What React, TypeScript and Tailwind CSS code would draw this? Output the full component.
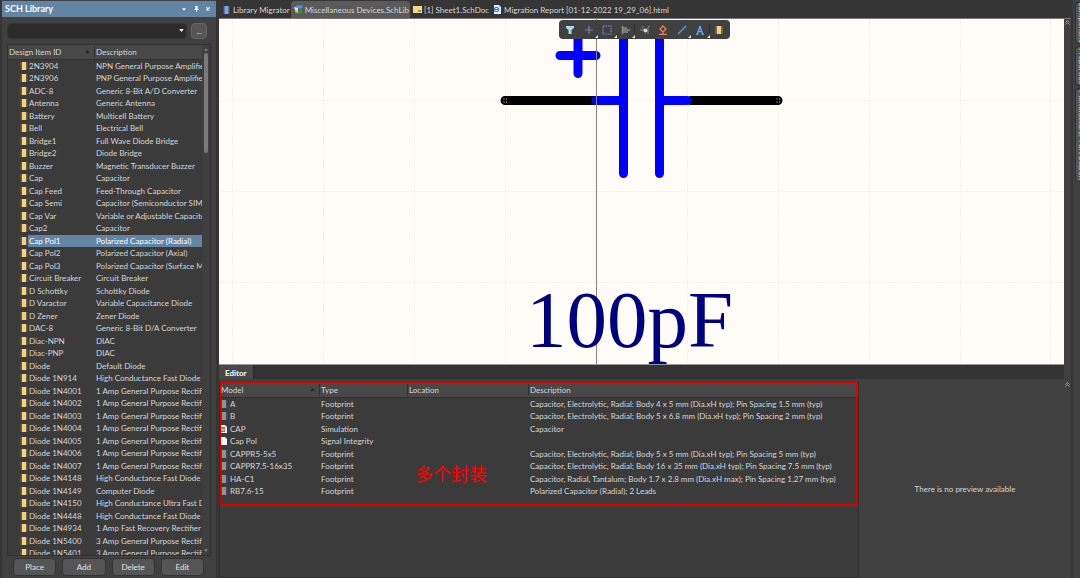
import React from 'react';

const libItems: [string, string][] = [
  ['2N3904', 'NPN General Purpose Amplifier'],
  ['2N3906', 'PNP General Purpose Amplifier'],
  ['ADC-8', 'Generic 8-Bit A/D Converter'],
  ['Antenna', 'Generic Antenna'],
  ['Battery', 'Multicell Battery'],
  ['Bell', 'Electrical Bell'],
  ['Bridge1', 'Full Wave Diode Bridge'],
  ['Bridge2', 'Diode Bridge'],
  ['Buzzer', 'Magnetic Transducer Buzzer'],
  ['Cap', 'Capacitor'],
  ['Cap Feed', 'Feed-Through Capacitor'],
  ['Cap Semi', 'Capacitor (Semiconductor SIM Model)'],
  ['Cap Var', 'Variable or Adjustable Capacitor'],
  ['Cap2', 'Capacitor'],
  ['Cap Pol1', 'Polarized Capacitor (Radial)'],
  ['Cap Pol2', 'Polarized Capacitor (Axial)'],
  ['Cap Pol3', 'Polarized Capacitor (Surface Mount)'],
  ['Circuit Breaker', 'Circuit Breaker'],
  ['D Schottky', 'Schottky Diode'],
  ['D Varactor', 'Variable Capacitance Diode'],
  ['D Zener', 'Zener Diode'],
  ['DAC-8', 'Generic 8-Bit D/A Converter'],
  ['Diac-NPN', 'DIAC'],
  ['Diac-PNP', 'DIAC'],
  ['Diode', 'Default Diode'],
  ['Diode 1N914', 'High Conductance Fast Diode'],
  ['Diode 1N4001', '1 Amp General Purpose Rectifier'],
  ['Diode 1N4002', '1 Amp General Purpose Rectifier'],
  ['Diode 1N4003', '1 Amp General Purpose Rectifier'],
  ['Diode 1N4004', '1 Amp General Purpose Rectifier'],
  ['Diode 1N4005', '1 Amp General Purpose Rectifier'],
  ['Diode 1N4006', '1 Amp General Purpose Rectifier'],
  ['Diode 1N4007', '1 Amp General Purpose Rectifier'],
  ['Diode 1N4148', 'High Conductance Fast Diode'],
  ['Diode 1N4149', 'Computer Diode'],
  ['Diode 1N4150', 'High Conductance Ultra Fast Diode'],
  ['Diode 1N4448', 'High Conductance Fast Diode'],
  ['Diode 1N4934', '1 Amp Fast Recovery Rectifier'],
  ['Diode 1N5400', '3 Amp General Purpose Rectifier'],
  ['Diode 1N5401', '3 Amp General Purpose Rectifier'],
];

type ModelIcon = 'footprint' | 'sim' | 'page';

const models: { icon: ModelIcon; name: string; type: string; desc: string }[] = [
  { icon: 'footprint', name: 'A', type: 'Footprint', desc: 'Capacitor, Electrolytic, Radial: Body 4 x 5 mm (Dia.xH typ); Pin Spacing 1.5 mm (typ)' },
  { icon: 'footprint', name: 'B', type: 'Footprint', desc: 'Capacitor, Electrolytic, Radial; Body 5 x 6.8 mm (Dia.xH typ); Pin Spacing 2 mm (typ)' },
  { icon: 'sim', name: 'CAP', type: 'Simulation', desc: 'Capacitor' },
  { icon: 'page', name: 'Cap Pol', type: 'Signal Integrity', desc: '' },
  { icon: 'footprint', name: 'CAPPR5-5x5', type: 'Footprint', desc: 'Capacitor, Electrolytic, Radial; Body 5 x 5 mm (Dia.xH typ); Pin Spacing 5 mm (typ)' },
  { icon: 'footprint', name: 'CAPPR7.5-16x35', type: 'Footprint', desc: 'Capacitor, Electrolytic, Radial; Body 16 x 35 mm (Dia.xH typ); Pin Spacing 7.5 mm (typ)' },
  { icon: 'footprint', name: 'HA-C1', type: 'Footprint', desc: 'Capacitor, Radial, Tantalum; Body 1.7 x 2.8 mm (Dia.xH max); Pin Spacing 1.27 mm (typ)' },
  { icon: 'footprint', name: 'RB7.6-15', type: 'Footprint', desc: 'Polarized Capacitor (Radial); 2 Leads' },
];

const ChipIcon = ({ body, pins, className }: { body: string; pins: string; className?: string }) => (
  <svg viewBox="0 0 8 8" className={className ?? 'w-2 h-2 shrink-0'}>
    <path d="M0.5 1h7M0.5 3h7M0.5 5h7M0.5 7h7" stroke={pins} strokeWidth="0.9" />
    <rect x="2" y="0" width="4" height="8" fill={body} />
  </svg>
);

const ModelGlyph = ({ icon }: { icon: ModelIcon }) => {
  if (icon === 'footprint') return <ChipIcon body="#8e929a" pins="#5c5f66" />;
  return (
    <svg viewBox="0 0 8 8" className="w-2 h-2 shrink-0">
      <path d="M1 0h4l2 2v6H1z" fill="#f4f6fa" />
      <path d="M5 0v2h2z" fill="#a9b6cc" />
      {icon === 'sim' && (
        <>
          <rect x="0" y="2" width="5" height="5" fill="#d9532c" />
          <path d="M1 5.5V4h1.5v1.500h1.500V3.500" stroke="#fff" strokeWidth="0.7" fill="none" />
        </>
      )}
    </svg>
  );
};

const SortArrow = () => (
  <svg viewBox="0 0 6 4" className="w-[5px] h-[3px]">
    <path d="M0 4L3 0l3 4z" fill="#232323" />
  </svg>
);

const CollapseIcon = () => (
  <svg viewBox="0 0 6 6" className="w-[5px] h-[5px]" fill="none" stroke="#b0b0b0" strokeWidth="1">
    <path d="M0.500 3L3 0.700 5.500 3M0.500 5.500L3 3.200l2.500 2.300" />
  </svg>
);

const LibraryPanel = () => (
  <aside className="flex w-[218px] shrink-0 flex-col border-x-2 border-[#353535] bg-[#404040]">
    <header className="flex h-4 mt-px shrink-0 items-center bg-[#6385a5] pl-[3px] pr-1">
      <h1 className="flex-1 text-[9px] font-bold text-white">SCH Library</h1>
      <div className="flex items-center gap-1">
        <button aria-label="Menu" className="flex w-2 justify-center">
          <svg viewBox="0 0 6 4" className="w-1 h-[3px]"><path d="M0 0h6L3 4z" fill="#fff" /></svg>
        </button>
        <button aria-label="Pin" className="flex w-2 justify-center">
          <svg viewBox="0 0 6 8" className="w-[5px] h-[6px]"><path d="M1.500 0h3v4H6v1H3.500v3h-1V5H0V4h1.500z" fill="#fff" /></svg>
        </button>
        <button aria-label="Close" className="flex w-2 justify-center">
          <svg viewBox="0 0 6 6" className="w-1 h-1"><path d="M0.500 0.500l5 5M5.500 0.500l-5 5" stroke="#fff" strokeWidth="1.700" /></svg>
        </button>
      </div>
    </header>

    <div className="mt-[6px] flex h-4 shrink-0 gap-1 pl-[5px] pr-[9px]">
      <div className="relative flex-1">
        <select aria-label="Filter" className="h-4 w-full appearance-none rounded-sm border border-[#353535] bg-[#2b2b2b] px-1 text-[#d0d0d0]">
          <option></option>
        </select>
        <svg viewBox="0 0 6 4" className="pointer-events-none absolute right-[3px] top-[6px] w-[5px] h-[3px]"><path d="M0 0h6L3 4z" fill="#fff" /></svg>
      </div>
      <button className="h-4 w-4 rounded-sm border border-[#666] bg-[#555] leading-none text-[#ddd]">...</button>
    </div>

    <div className="mx-[5px] mt-[5px] flex min-h-0 flex-1 border border-[#303030] bg-[#3b3b3b]">
      <div className="min-w-0 flex-1 overflow-hidden">
        <table className="w-full table-fixed border-collapse">
          <thead>
            <tr className="h-[14px] border-b border-[#303030] bg-[#484848] text-left">
              <th className="w-[87px] p-0 pl-px font-normal">
                <div className="flex items-center justify-between border-r border-[#303030] pr-1">Design Item ID <SortArrow /></div>
              </th>
              <th className="p-0 pl-px font-normal">Description</th>
            </tr>
          </thead>
          <tbody>
            {libItems.map(([id, desc]) => {
              const selected = id === 'Cap Pol1';
              return (
                <tr key={id} className="odd:h-[12px] even:h-[13px]">
                  <td className="p-0 pl-3">
                    <div className="flex items-center">
                      <ChipIcon body="#f3d382" pins="#a98a3e" />
                      <span className={`flex-1 whitespace-nowrap pl-px ${selected ? 'bg-[#6385a5] text-white' : ''}`}>{id}</span>
                    </div>
                  </td>
                  <td className={`overflow-hidden whitespace-nowrap p-0 pl-px ${selected ? 'bg-[#6385a5] text-white' : ''}`}>{desc}</td>
                </tr>
              );
            })}
          </tbody>
        </table>
      </div>
      <div className="flex w-2 shrink-0 flex-col items-center bg-[#3f3f3f] py-[3px]">
        <svg viewBox="0 0 6 4" className="w-1 h-[3px]"><path d="M0 4L3 0l3 4z" fill="#858585" /></svg>
        <div className="mt-[2px] h-[100px] w-1 rounded-full bg-[#7a7a7a]" />
        <svg viewBox="0 0 6 4" className="mt-auto w-1 h-[3px]"><path d="M0 0h6L3 4z" fill="#858585" /></svg>
      </div>
    </div>

    <div className="my-[2px] flex h-[18px] shrink-0 gap-[6px] pl-[11px] pr-3">
      {['Place', 'Add', 'Delete', 'Edit'].map((label) => (
        <button key={label} className="flex-1 rounded-sm border border-[#333] bg-[#555] text-[#e2e2e2]">{label}</button>
      ))}
    </div>
  </aside>
);

const docTabs = [
  { label: 'Library Migrator', kind: 'migrator' },
  { label: 'Miscellaneous Devices.SchLib', kind: 'lib' },
  { label: '[1] Sheet1.SchDoc', kind: 'sheet' },
  { label: 'Migration Report [01-12-2022 19_29_06].html', kind: 'html' },
];

const TabIcon = ({ kind }: { kind: string }) => {
  if (kind === 'migrator') return <ChipIcon body="#7da2ef" pins="#56688f" className="w-[9px] h-2 shrink-0" />;
  return (
    <svg viewBox="0 0 9 9" className="w-[9px] h-[9px] shrink-0">
      {kind === 'lib' && (
        <>
          <path d="M1 2l3-2 5 1-2 3z" fill="#4c97d8" />
          <path d="M0 2l4 1v2H1z" fill="#e9eef2" />
          <path d="M1 5h6l1-2v4L5 9 1 7z" fill="#3e8a3c" />
          <path d="M1 4l3 1v3L1 7z" fill="#e9bd45" />
        </>
      )}
      {kind === 'sheet' && (
        <>
          <rect x="0" y="1" width="9" height="7" fill="#f2d785" />
          <path d="M5 5h3v2H5z" fill="#a98e42" />
        </>
      )}
      {kind === 'html' && (
        <>
          <path d="M1 0h5l2 2v7H1z" fill="#eef4fb" />
          <path d="M6 0v2h2z" fill="#8fb0d8" />
          <circle cx="3.500" cy="4.500" r="2.200" fill="none" stroke="#2f7fd0" strokeWidth="1.200" />
          <path d="M1.500 4.500h4" stroke="#2f7fd0" />
        </>
      )}
    </svg>
  );
};

const tools: { name: string; more?: boolean; sep?: boolean; icon: React.ReactNode }[] = [
  { name: 'Filter', icon: <path d="M1 1h8v2L6.500 5v4h-3V5L1 3z" fill="#a9dbe6" /> },
  { name: 'Move', more: true, icon: <path d="M5 1v8M1 5h8" stroke="#6b86c4" strokeWidth="1.200" /> },
  { name: 'Select', more: true, icon: <rect x="1" y="1" width="8" height="8" fill="none" stroke="#728cd0" strokeWidth="1.200" strokeDasharray="1.600 0.900" /> },
  { name: 'Align', more: true, sep: true, icon: <path d="M1.500 1v8M2 3h4M2 5h7M2 7h5" stroke="#8c8c8c" strokeWidth="1.500" /> },
  { name: 'Pin', icon: <><path d="M0 5h4M3 4V1M8 9V2l2-1" stroke="#7488b5" fill="none" /><circle cx="5.500" cy="5.500" r="2" fill="#f8d08e" /></> },
  { name: 'Sheet', icon: <path d="M5 1l3 3-3 3-3-3zM5 7v2M1 9.300h8" stroke="#e8805f" strokeWidth="1.300" fill="none" /> },
  { name: 'Line', more: true, icon: <path d="M1 9l8-8" stroke="#4d9bea" strokeWidth="1.500" /> },
  { name: 'Text', more: true, sep: true, icon: <path d="M5 1L2.300 9M5 1l2.500 8M3 6.500h4M1 9h2.500M6.500 9H9" stroke="#5fa6ec" strokeWidth="1.300" fill="none" /> },
  { name: 'Part', icon: <><path d="M1 2h8M1 4h8M1 6h8M1 8h8" stroke="#a98a3e" /><rect x="3" y="1" width="4" height="8" fill="#f3d382" /></> },
];

const Toolbar = () => (
  <div className="absolute left-[340px] top-px flex h-[19px] w-[171px] rounded-sm bg-[#404040] px-[2px]">
    {tools.map((t) => (
      <button key={t.name} aria-label={t.name} className="relative flex flex-1 items-center justify-center">
        <svg viewBox="0 0 10 10" className="w-[10px] h-[10px]">{t.icon}</svg>
        {t.more && (
          <svg viewBox="0 0 3 3" className="absolute bottom-px right-0 w-[3px] h-[3px]"><path d="M3 0v3H0z" fill="#e6e6e6" /></svg>
        )}
        {t.sep && <span className="absolute right-0 top-1 h-[9px] w-px bg-[#2a2a2a]" />}
      </button>
    ))}
  </div>
);

// Schematic symbol, drawn in canvas coordinates
const Schematic = () => (
  <svg width="845" height="345" viewBox="0 0 845 345" className="block">
    <g stroke="#f3f0ee" strokeDasharray="2 1">
      {[13, 104, 195, 286, 377, 468, 559, 650, 741, 831].map((x) => (
        <path key={x} d={`M${x}.5 0V345`} />
      ))}
      {[81, 172, 263].map((y) => (
        <path key={y} d={`M0 ${y}.5H845`} />
      ))}
    </g>
    <g strokeLinecap="round" strokeWidth="9" fill="none">
      <path d="M286 81.500H376M472 81.500H559" stroke="#000" />
      <path d="M377 81.500H404M440.500 81.500H468M404.500 15V154.500M440.500 15V154.500M359 15V54.500M341 36.500H377" stroke="#00f" />
    </g>
    <path d="M284.500 80h1M287 80h1M284.500 83h1M287 83h1M557.500 80h1M560 80h1M557.500 83h1M560 83h1" stroke="#ddd" />
    <path d="M377.500 0V345" stroke="#85827f" />
    <text x="307" y="328" fontSize="81" fill="#000080" className="font-['Liberation_Serif',serif]">100pF</text>
  </svg>
);

const EditorPanel = () => (
  <section className="flex min-h-0 flex-1 flex-col bg-[#404040]">
    <div className="mr-[7px] flex h-[14px] shrink-0 bg-[#333]">
      <button className="border-r border-[#292929] bg-[#484848] px-[6px] pt-px font-bold text-white">Editor</button>
    </div>
    <div className="flex min-h-0 flex-1">
      <div className="relative mt-[3px] min-w-0 flex-[638] border border-[#303030] bg-[#3b3b3b]">
        <table className="w-full table-fixed border-collapse">
          <thead>
            <tr className="h-[14px] border-b border-[#303030] bg-[#484848] text-left">
              <th className="w-[100px] p-0 font-normal">
                <div className="flex items-center justify-between border-r border-[#303030] pl-px pr-1">Model <SortArrow /></div>
              </th>
              <th className="w-[88px] p-0 font-normal"><div className="border-r border-[#303030] pl-px">Type</div></th>
              <th className="w-[121px] p-0 font-normal"><div className="border-r border-[#303030] pl-px">Location</div></th>
              <th className="p-0 pl-px font-normal">Description</th>
            </tr>
          </thead>
          <tbody>
            {models.map((m) => (
              <tr key={m.name} className="whitespace-nowrap odd:h-[12px] even:h-[13px]">
                <td className="p-0">
                  <div className="flex items-center gap-[2px]"><ModelGlyph icon={m.icon} />{m.name}</div>
                </td>
                <td className="p-0 pl-px">{m.type}</td>
                <td className="p-0" />
                <td className="p-0 pl-px">{m.desc}</td>
              </tr>
            ))}
          </tbody>
        </table>
        <div className="pointer-events-none absolute -top-px left-0 right-px h-[124px] border border-b-2 border-[#e00000]" />
        <p className="absolute left-[195px] top-[78px] font-['Noto_Sans_CJK_SC',sans-serif] text-[18px] leading-6 text-[#f00]">多个封装</p>
      </div>
      <div className="flex flex-[212] bg-[#404040]">
        <p className="flex flex-1 items-center justify-center pl-[7px] pt-5">There is no preview available</p>
        <div className="w-[7px] px-px pt-[3px]"><CollapseIcon /></div>
      </div>
    </div>
  </section>
);

const sideTabs = [
  { label: 'Components', height: 'h-[42px]' },
  { label: 'Properties', height: 'h-[40px]' },
  { label: 'Manufacturer Part Search', height: 'h-[94px]' },
];

export default function App() {
  return (
    <div className="flex h-screen overflow-hidden bg-[#353535] font-[Lato,'Noto_Sans',sans-serif] text-[8px] leading-3 text-[#d6d6d6]">
      <LibraryPanel />
      <main className="flex min-w-0 flex-1 flex-col pl-px">
        <nav className="flex h-[19px] shrink-0 items-end border-b border-[#777]">
          {docTabs.map((t) => (
            <button
              key={t.label}
              className={`flex h-[17px] items-center gap-[2px] whitespace-nowrap rounded-t-sm pl-[3px] pr-px ${t.kind === 'lib' ? 'bg-[#5a5a5a]' : ''}`}
            >
              <TabIcon kind={t.kind} />
              {t.label}
            </button>
          ))}
        </nav>
        <div className="flex shrink-0">
          <div className="relative min-w-0 flex-1 overflow-hidden border-b border-[#999] bg-[#fffcf7]">
            <Schematic />
            <Toolbar />
          </div>
          <div className="flex w-[7px] justify-center bg-[#404040] pt-px"><CollapseIcon /></div>
        </div>
        <EditorPanel />
      </main>
      <aside className="flex w-[9px] shrink-0 flex-col gap-[2px] border-l-2 border-[#353535] bg-[#404040] pl-[2px] pt-[2px]">
        {sideTabs.map((t) => (
          <button key={t.label} className={`flex items-center overflow-hidden rounded-l-sm border border-r-0 border-[#2c2c2c] bg-[#555] ${t.height}`}>
            <span className="whitespace-nowrap [writing-mode:vertical-rl]">{t.label}</span>
          </button>
        ))}
      </aside>
    </div>
  );
}
